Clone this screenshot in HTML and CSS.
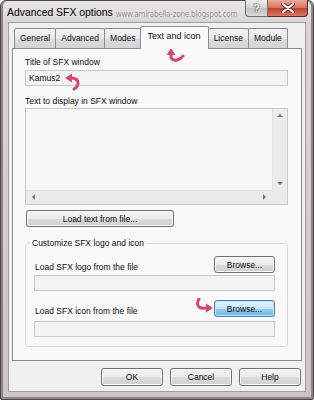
FILE: index.html
```html
<!DOCTYPE html>
<html lang="en">
    <head>
        <meta charset="UTF-8">
        <title>Advanced SFX options</title>
        <link rel="stylesheet" href="styles.css">
    </head>
    <body>
        <div class="window">
            <div class="titlebar">
                <span class="title">Advanced SFX options</span>
                <span class="watermark">www.amirabella-zone.blogspot.com</span>
                <div class="caption-btns">
                    <span class="cap help">?</span>
                    <span class="cap close">
                        <svg width="14" height="10" viewBox="0 0 14 10">
                            <path d="M2 1 L12 9 M12 1 L2 9" stroke="#5a2520" stroke-width="4" stroke-linecap="round"/>
                            <path d="M2 1 L12 9 M12 1 L2 9" stroke="#fff" stroke-width="2.2" stroke-linecap="round"/>
                        </svg>
                    </span>
                </div>
            </div>

            <div class="client">
                <div class="tabs">
                    <span class="tab">General</span>
                    <span class="tab">Advanced</span>
                    <span class="tab">Modes</span>
                    <span class="tab active">Text and icon</span>
                    <span class="tab">License</span>
                    <span class="tab">Module</span>
                </div>

                <div class="panel">
                    <label class="lbl">Title of SFX window</label>
                    <div class="field">Kamus2</div>

                    <label class="lbl gap">Text to display in SFX window</label>
                    <div class="textarea">
                        <div class="ta-body"></div>
                        <div class="vscroll">
                            <span class="arr up"></span>
                            <span class="arr down"></span>
                        </div>
                        <div class="hscroll">
                            <span class="arr left"></span>
                            <span class="arr right"></span>
                        </div>
                        <div class="corner"></div>
                    </div>

                    <button class="btn load">Load text from file...</button>

                    <fieldset class="group">
                        <legend>Customize SFX logo and icon</legend>
                        <div class="row">
                            <span>Load SFX logo from the file</span>
                            <button class="btn browse">Browse...</button>
                        </div>
                        <div class="field"></div>

                        <div class="row second">
                            <span>Load SFX icon from the file</span>
                            <button class="btn browse focus">Browse...</button>
                        </div>
                        <div class="field"></div>
                    </fieldset>

                    <!-- red hint arrows drawn over the dialog -->
                    <svg class="hint hint-tab" width="20" height="16" viewBox="0 0 20 16">
                        <path d="M4 6 L4 9 Q5 13 10 12 Q14 11 16 8" fill="none" stroke="#d8456d" stroke-width="3" stroke-linecap="round"/>
                        <path d="M-0.5 7 L8.5 7 L4 0 Z" fill="#d8456d"/>
                    </svg>
                    <svg class="hint hint-title" width="18" height="18" viewBox="0 0 18 18">
                        <path d="M6 4 Q13 4 13 9 Q13 13 9 15" fill="none" stroke="#d8456d" stroke-width="3" stroke-linecap="round"/>
                        <path d="M7 -0.5 L7 8.5 L0 4 Z" fill="#d8456d"/>
                    </svg>
                    <svg class="hint hint-browse" width="20" height="18" viewBox="0 0 20 18">
                        <path d="M4 1 Q1 6 4 9 Q7 11 12 10" fill="none" stroke="#d8456d" stroke-width="3" stroke-linecap="round"/>
                        <path d="M11 5.5 L11 14.5 L18 10 Z" fill="#d8456d"/>
                    </svg>
                </div>

                <div class="footer">
                    <button class="btn">OK</button>
                    <button class="btn">Cancel</button>
                    <button class="btn">Help</button>
                </div>
            </div>
        </div>
    </body>
</html>
```

FILE: styles.css
```css
* {
    box-sizing: border-box;
}

body {
    margin: 0;
    font-family: "Liberation Sans", Arial, sans-serif;
    font-size: 8.5px;
    color: #0d0d0d;
}

.window {
    width: 314px;
    height: 400px;
    display: flex;
    flex-direction: column;
    padding: 0 7px 7px;
    border: 1px solid #4f4647;
    border-radius: 6px 6px 2px 2px;
    background: linear-gradient(to bottom, #e9e7e8 0, #d9d5d6 22px, #cbc5c6 100%);
    box-shadow: inset 2px 0 0 #8f8384, inset -2px 0 0 #8f8384, inset 0 -2px 0 #8f8384;
}

/* title bar */
.titlebar {
    height: 21px;
    display: flex;
    align-items: flex-start;
    white-space: nowrap;
}

.title {
    flex-shrink: 0;
    margin: 6px 0 0 -1px;
    font-size: 10.4px;
    color: #000;
}

.watermark {
    flex-shrink: 0;
    margin: 8px 0 0 3px;
    font-family: "Liberation Sans Narrow", "DejaVu Sans", sans-serif;
    font-stretch: condensed;
    font-size: 8.1px;
    letter-spacing: -0.25px;
    color: #968e8f;
    text-shadow: 0 0 2px #fff;
}

.caption-btns {
    flex-shrink: 0;
    margin: -1px -2px 0 auto;
    display: flex;
}

.cap {
    height: 17px;
    display: flex;
    align-items: center;
    justify-content: center;
}

.cap.help {
    width: 23px;
    border: 1px solid #716b6c;
    border-top: none;
    border-radius: 0 0 0 4px;
    background: linear-gradient(to bottom, #eeeded 0%, #d8d5d5 50%, #c4bfc0 51%, #dcd9d9 100%);
    color: #fff;
    font-weight: bold;
    font-size: 11px;
    text-shadow: 0 0 2px #3d3a3a, 0 0 1px #3d3a3a;
}

.cap.close {
    width: 40px;
    border: 1px solid #5b2d2a;
    border-top: none;
    border-left: none;
    border-radius: 0 0 4px 0;
    background: linear-gradient(to bottom, #eaa99e 0%, #d6725f 50%, #c63f2e 51%, #d77c66 100%);
}

/* client area */
.client {
    flex: 1;
    display: flex;
    flex-direction: column;
    padding: 3px 3px 0;
    background: #f0f0f0;
    border: 1px solid #a39c9d;
}

.tabs {
    height: 22px;
    display: flex;
    align-items: flex-end;
    padding-left: 2px;
}

.tab {
    height: 20px;
    padding: 0 5px;
    line-height: 19px;
    margin-right: -1px;
    border: 1px solid #898c95;
    border-bottom: none;
    border-radius: 2px 2px 0 0;
    background: linear-gradient(to bottom, #f4f4f4 0%, #e8e8e8 50%, #dcdcdc 51%, #d4d4d4 100%);
}

.tab.active {
    position: relative;
    z-index: 1;
    height: 23px;
    margin: 0 -1px -1px -1px;
    padding: 0 7px;
    line-height: 18px;
    font-size: 9px;
    background: #fafafa;
}

.panel {
    flex: 1;
    position: relative;
    padding: 8px 13px 0 12px;
    border: 1px solid #898c95;
    background: #f9f9f9;
}

.lbl {
    display: block;
    line-height: 11px;
}

.lbl.gap {
    margin-top: 10px;
}

.field {
    height: 16px;
    margin-top: 2px;
    padding-left: 3px;
    line-height: 14px;
    border: 1px solid #c9c9c9;
    background: #f3f3f3;
}

.textarea {
    height: 97px;
    margin-top: 1px;
    display: grid;
    grid-template-columns: 1fr 15px;
    grid-template-rows: 1fr 14px;
    border: 1px solid #c9c9c9;
    background: #f6f6f6;
}

.vscroll,
.hscroll,
.corner {
    position: relative;
    background: #ebebeb;
}

.vscroll {
    border-left: 1px solid #e2e2e2;
}

.hscroll {
    border-top: 1px solid #e2e2e2;
}

.arr {
    position: absolute;
    width: 0;
    height: 0;
    border: 3px solid transparent;
}

.arr.up {
    top: 5px;
    left: 4px;
    border-bottom-color: #777;
    border-top-width: 0;
}

.arr.down {
    bottom: 5px;
    left: 4px;
    border-top-color: #777;
    border-bottom-width: 0;
}

.arr.left {
    top: 3px;
    left: 6px;
    border-right-color: #777;
    border-left-width: 0;
}

.arr.right {
    top: 3px;
    right: 6px;
    border-left-color: #777;
    border-right-width: 0;
}

.btn {
    display: block;
    height: 17px;
    padding: 0;
    font-family: inherit;
    font-size: 8.5px;
    color: #0d0d0d;
    border: 1px solid #707070;
    border-radius: 3px;
    background: linear-gradient(to bottom, #f3f3f3 0%, #ebebeb 50%, #dcdcdc 51%, #cfcfcf 100%);
    box-shadow: inset 0 0 0 1px #fbfbfb;
}

.btn.load {
    width: 148px;
    margin: 5px 0 0 1px;
}

.group {
    margin: 11px 0 0;
    padding: 7px 12px 9px 8px;
    border: 1px solid #d5dade;
    border-radius: 3px;
}

.group legend {
    margin-left: -4px;
    padding: 0 2px;
    line-height: 11px;
}

.row {
    display: flex;
    justify-content: space-between;
    align-items: flex-end;
    padding-left: 1px;
}

.row span {
    line-height: 11px;
}

.row.second {
    margin-top: 9px;
}

.row + .field {
    margin-top: 2px;
}

.row.second + .field {
    margin-top: 4px;
}

.btn.browse {
    width: 61px;
}

.btn.focus {
    border-color: #3c7fb1;
    background: linear-gradient(to bottom, #e5f4fc 0%, #c4e5f6 50%, #98d1ef 51%, #68b3db 100%);
    box-shadow: inset 0 0 0 1px #c8e6f7;
}

.hint {
    position: absolute;
}

.hint-tab {
    left: 154px;
    top: -1px;
}

.hint-title {
    left: 52px;
    top: 25px;
}

.hint-browse {
    left: 182px;
    top: 249px;
}

.footer {
    height: 30px;
    display: flex;
    justify-content: flex-end;
    gap: 7px;
    padding: 7px 1px 0 0;
}

.footer .btn {
    width: 62px;
    height: 18px;
}
```
